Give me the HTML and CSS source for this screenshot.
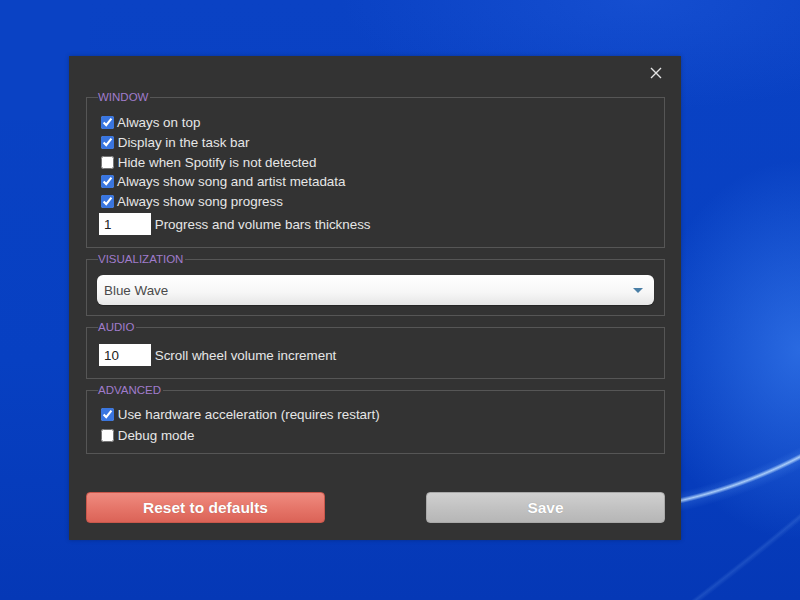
FILE: index.html
```html
<!DOCTYPE html>
<html lang="en">
<head>
    <meta charset="UTF-8">
    <title>Settings</title>
    <link rel="stylesheet" href="styles.css">
</head>
<body>
    <div class="settings-window">
        <div class="titlebar">
            <button class="close-btn" title="Close">
                <svg width="12" height="12" viewBox="0 0 12 12"><path d="M1 1 L11 11 M11 1 L1 11" stroke="#e4e4e4" stroke-width="1.4" fill="none"/></svg>
            </button>
        </div>

        <fieldset class="group">
            <legend>Window</legend>
            <label class="row"><input type="checkbox" checked> Always on top</label>
            <label class="row"><input type="checkbox" checked> Display in the task bar</label>
            <label class="row"><input type="checkbox"> Hide when Spotify is not detected</label>
            <label class="row"><input type="checkbox" checked> Always show song and artist metadata</label>
            <label class="row"><input type="checkbox" checked> Always show song progress</label>
            <label class="row input-row"><input type="text" class="num-input" value="1"> Progress and volume bars thickness</label>
        </fieldset>

        <fieldset class="group group-select">
            <legend>Visualization</legend>
            <div class="select-wrap">
                <select class="select">
                    <option>Blue Wave</option>
                </select>
            </div>
        </fieldset>

        <fieldset class="group group-audio">
            <legend>Audio</legend>
            <label class="row input-row"><input type="text" class="num-input" value="10"> Scroll wheel volume increment</label>
        </fieldset>

        <fieldset class="group group-advanced">
            <legend>Advanced</legend>
            <label class="row"><input type="checkbox" checked> Use hardware acceleration (requires restart)</label>
            <label class="row"><input type="checkbox"> Debug mode</label>
        </fieldset>

        <div class="actions">
            <button class="btn btn-reset">Reset to defaults</button>
            <button class="btn btn-save">Save</button>
        </div>
    </div>
</body>
</html>
```

FILE: styles.css
```css
* {
    box-sizing: border-box;
}

html, body {
    margin: 0;
    height: 600px;
    overflow: hidden;
}

/* desktop wallpaper: flat blue, a glow on the right and two light streaks */
body {
    font-family: "Liberation Sans", Arial, sans-serif;
    font-size: 13.4px;
    color: #e6e6e6;
    padding: 56px 0 0 69px;
    background:
        radial-gradient(ellipse 300px 110px at 640px 0px, rgba(40, 100, 230, 0.35), transparent),
        linear-gradient(#0a42c4, #0a42c4) 0 0 / 90px 120px no-repeat,
        radial-gradient(circle 620px at 570px 14px, transparent 496px, rgba(190, 222, 255, 0.85) 499px, transparent 502px),
        radial-gradient(circle 620px at 570px 14px, transparent 490px, rgba(110, 170, 255, 0.22) 499px, transparent 510px),
        radial-gradient(circle 3100px at -1125px -1783px, transparent 2996px, rgba(140, 190, 255, 0.16) 2999px, transparent 3003px),
        radial-gradient(ellipse 150px 190px at 800px 350px, rgba(70, 140, 250, 0.55), transparent),
        linear-gradient(180deg, #0a42c4 0%, #0740c2 60%, #0538b6 100%);
}

.settings-window {
    width: 612px;
    height: 484px;
    background: #333333;
    padding: 0 16px 17px 17px;
    display: flex;
    flex-direction: column;
    box-shadow: 0 0 4px rgba(0, 0, 0, 0.25);
}

.titlebar {
    height: 34px;
    display: flex;
    justify-content: flex-end;
    align-items: flex-start;
    padding-top: 9px;
}

.close-btn {
    width: 16px;
    height: 16px;
    margin-right: 1px;
    padding: 2px;
    border: none;
    background: none;
    cursor: pointer;
}

.close-btn svg {
    display: block;
}

.group {
    margin: 0 0 4px;
    padding: 9px 10px 11px;
    border: 1px solid #565656;
}

.group legend {
    font-size: 11.5px;
    line-height: 14px;
    text-transform: uppercase;
    color: #a07ccc;
    padding: 0 2px 0 0;
    margin-left: 1px;
}

.row {
    display: flex;
    align-items: center;
    height: 19.7px;
    white-space: pre;
}

.row input[type="checkbox"] {
    width: 13px;
    height: 13px;
    margin: 0 0 0 4px;
    accent-color: #3a76e0;
}

.input-row {
    height: 24px;
}

.row + .input-row {
    margin-top: 1px;
}

.num-input {
    width: 52px;
    height: 22px;
    margin: 0 0 0 2px;
    border: none;
    padding: 0 5px;
    background: #ffffff;
    font-family: inherit;
    font-size: 13.4px;
    color: #222;
}

.group-audio {
    padding-bottom: 11px;
}

.group-advanced {
    padding: 7px 10px 7px;
}

.group-advanced .row {
    height: 21px;
}

.select-wrap {
    position: relative;
    margin-bottom: -1px;
}

.select {
    appearance: none;
    width: 100%;
    height: 30px;
    border: none;
    border-radius: 6px;
    padding: 0 7px;
    background: linear-gradient(180deg, #ffffff 0%, #f6f6f6 60%, #e6e6e6 100%);
    font-family: inherit;
    font-size: 13.4px;
    color: #4a4a4a;
    box-shadow: 0 1px 1px rgba(0, 0, 0, 0.3);
}

.select-wrap::after {
    content: "";
    position: absolute;
    right: 11px;
    top: 13px;
    border-left: 5px solid transparent;
    border-right: 5px solid transparent;
    border-top: 5px solid #4a7fa6;
    pointer-events: none;
}

.actions {
    margin-top: auto;
    display: flex;
    justify-content: space-between;
}

.btn {
    width: 239px;
    height: 31px;
    border-radius: 4px;
    font-family: "Liberation Sans", Arial, sans-serif;
    font-size: 15.5px;
    font-weight: 700;
    color: #ffffff;
    text-shadow: 0 0 1px rgba(0, 0, 0, 0.25);
    cursor: pointer;
}

.btn-reset {
    border: 1px solid #c9574b;
    background: linear-gradient(180deg, #ef8b80 0%, #e6766a 50%, #db6357 100%);
}

.btn-save {
    border: 1px solid #a9a9a9;
    background: linear-gradient(180deg, #d0d0d0 0%, #c2c2c2 50%, #b6b6b6 100%);
}
```
